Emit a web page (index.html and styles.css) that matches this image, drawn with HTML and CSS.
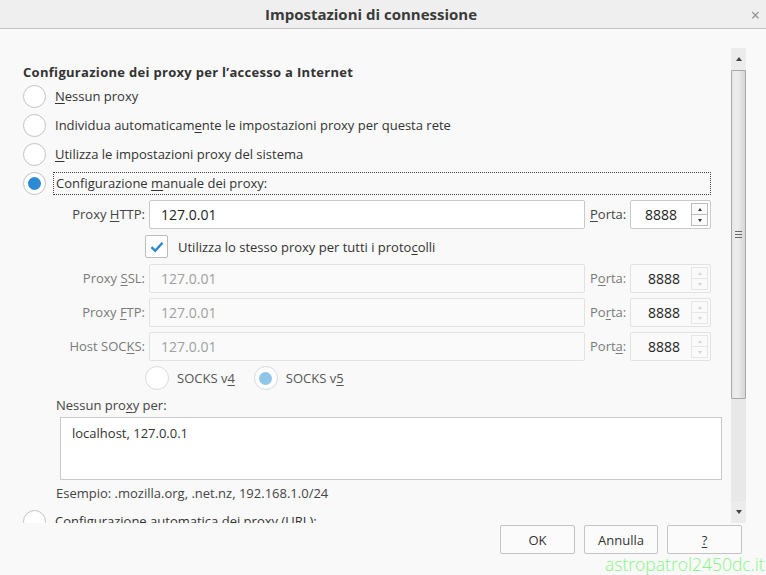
FILE: index.html
```html
<!DOCTYPE html>
<html lang="it">
<head>
<meta charset="utf-8">
<title>Impostazioni di connessione</title>
<link rel="stylesheet" href="styles.css">
</head>
<body>
<div class="window">
  <div class="titlebar">
    <span class="title">Impostazioni di connessione</span>
    <span class="close">×</span>
  </div>
  <div class="main">
    <div class="content">
      <div class="heading">Configurazione dei proxy per l’accesso a Internet</div>
      <div class="radio-row"><span class="radio"></span><span class="rlabel"><u>N</u>essun proxy</span></div>
      <div class="radio-row"><span class="radio"></span><span class="rlabel">Individua automaticam<u>e</u>nte le impostazioni proxy per questa rete</span></div>
      <div class="radio-row"><span class="radio"></span><span class="rlabel"><u>U</u>tilizza le impostazioni proxy del sistema</span></div>
      <div class="radio-row"><span class="radio checked"></span><span class="rlabel focus">Configurazione <u>m</u>anuale dei proxy:</span></div>

      <div class="proxy-grid">
        <span class="flabel">Proxy <u>H</u>TTP:</span>
        <span class="field"><span class="val">127.0.01</span></span>
        <span class="plabel"><u>P</u>orta:</span>
        <span class="port"><span class="pval">8888</span><span class="spin"><span class="up"></span><span class="down"></span></span></span>

        <span class="check-row"><span class="checkbox"><svg width="14" height="12" viewBox="0 0 14 12"><path d="M1.5 6.2 L5.2 9.8 L12.5 1.8" fill="none" stroke="#2b87cc" stroke-width="2.4"/></svg></span><span class="clabel">Utilizza lo stesso proxy per tutti i proto<u>c</u>olli</span></span>

        <span class="flabel dis">Proxy <u>S</u>SL:</span>
        <span class="field dis"><span class="val">127.0.01</span></span>
        <span class="plabel dis">P<u>o</u>rta:</span>
        <span class="port dis"><span class="pval">8888</span><span class="spin"><span class="up"></span><span class="down"></span></span></span>

        <span class="flabel dis">Proxy <u>F</u>TP:</span>
        <span class="field dis"><span class="val">127.0.01</span></span>
        <span class="plabel dis">Po<u>r</u>ta:</span>
        <span class="port dis"><span class="pval">8888</span><span class="spin"><span class="up"></span><span class="down"></span></span></span>

        <span class="flabel dis">Host SOC<u>K</u>S:</span>
        <span class="field dis"><span class="val">127.0.01</span></span>
        <span class="plabel dis">Port<u>a</u>:</span>
        <span class="port dis"><span class="pval">8888</span><span class="spin"><span class="up"></span><span class="down"></span></span></span>

        <span class="socks-row">
          <span class="radio"></span><span class="slabel">SOCKS v<u>4</u></span>
          <span class="radio checked dis"></span><span class="slabel">SOCKS v<u>5</u></span>
        </span>
      </div>

      <div class="noproxy-label">Nessun pro<u>x</u>y per:</div>
      <div class="textarea">localhost, 127.0.0.1</div>
      <div class="example">Esempio: .mozilla.org, .net.nz, 192.168.1.0/24</div>
      <div class="radio-row last"><span class="radio"></span><span class="rlabel">Configurazione automatica dei proxy (URL):</span></div>
    </div>
    <div class="scrollbar">
      <div class="sb-btn"><span class="tri-up"></span></div>
      <div class="sb-thumb"><span class="grip"></span></div>
      <div class="sb-track"></div>
      <div class="sb-btn"><span class="tri-down"></span></div>
    </div>
  </div>
  <div class="footer">
    <span class="btn">OK</span>
    <span class="btn narrow">Annulla</span>
    <span class="btn"><u>?</u></span>
  </div>
  <div class="watermark">astropatrol2450dc.it</div>
</div>
</body>
</html>
```

FILE: styles.css
```css
* { box-sizing: border-box; }
html, body { margin: 0; padding: 0; }
body {
  font-family: "Open Sans", "Liberation Sans", sans-serif;
  font-size: 13px;
  color: #333;
  background: #f9f9f9;
}
u { text-decoration: underline; text-underline-offset: 2px; text-decoration-thickness: 1px; }

.window {
  position: relative;
  width: 766px;
  height: 575px;
  overflow: hidden;
  display: flex;
  flex-direction: column;
  background: #f9f9f9;
}
.titlebar {
  position: relative;
  height: 29px;
  flex: none;
  background: #efefef;
  border-bottom: 1px solid #c4c4c4;
  display: flex;
  align-items: center;
  justify-content: center;
}
.title {
  font-weight: 700;
  font-size: 15px;
  color: #3a3a3a;
  margin-right: 24px;
}
.close {
  position: absolute;
  right: 6px;
  top: 4px;
  font-size: 16px;
  color: #8a8a8a;
}

.main {
  height: 494px;
  flex: none;
  display: flex;
}
.content {
  flex: 1;
  overflow: hidden;
  padding: 33px 0 0 23px;
}
.heading {
  font-weight: 700;
  height: 20px;
  line-height: 20px;
  color: #333;
  letter-spacing: 0.3px;
}
.radio-row {
  height: 29px;
  display: flex;
  align-items: center;
}
.radio {
  width: 23px;
  height: 23px;
  border-radius: 50%;
  border: 1px solid #c3c3c3;
  background: #fff;
  flex: none;
  display: flex;
  align-items: center;
  justify-content: center;
}
.radio.checked::after {
  content: "";
  width: 13px;
  height: 13px;
  border-radius: 50%;
  background: #2b8ad3;
}
.radio.checked.dis::after { background: #8fc5e8; }
.radio.checked.dis { border-color: #d8d8d8; }
.rlabel {
  margin-left: 7px;
  line-height: 21px;
  padding: 0 2px;
}
.rlabel.focus {
  flex: none;
  width: 658px;
  border: 1px dotted #444;
  margin-left: 7px;
}

.proxy-grid {
  display: grid;
  grid-template-columns: 122px 440px 45px 81px;
  grid-template-rows: 29px 25px 29px 29px 29px 24px;
  row-gap: 5px;
  margin-top: 2px;
  align-items: center;
}
.proxy-grid > .flabel,
.proxy-grid > .field,
.proxy-grid > .plabel,
.proxy-grid > .port { height: 29px; }
.flabel {
  text-align: right;
  line-height: 29px;
  color: #444;
}
.flabel.dis, .plabel.dis { color: #7a7a7a; }
.field {
  margin-left: 4px;
  background: #fff;
  border: 1px solid #c9c9c9;
  border-radius: 2px;
  display: flex;
  align-items: center;
  padding-left: 11px;
  font-size: 14px;
  color: #222;
}
.field.dis { background: #fafafa; border-color: #e2e2e2; color: #a0a0a0; }
.plabel {
  line-height: 29px;
  padding-left: 5px;
  color: #444;
}
.port {
  background: #fff;
  border: 1px solid #c9c9c9;
  border-radius: 2px;
  display: flex;
  align-items: center;
  justify-content: space-between;
  padding-left: 14px;
  padding-right: 2px;
  font-size: 14px;
  color: #222;
}
.port.dis { background: #fafafa; border-color: #e2e2e2; padding-left: 17px; }
.spin {
  width: 17px;
  height: 23px;
  border: 1px solid #bdbdbd;
  display: flex;
  flex-direction: column;
  background: #fafafa;
}
.spin .up, .spin .down {
  flex: 1;
  display: flex;
  align-items: center;
  justify-content: center;
}
.spin .up { border-bottom: 1px solid #bdbdbd; }
.spin .up::after {
  content: "";
  border-left: 2.5px solid transparent;
  border-right: 2.5px solid transparent;
  border-bottom: 3px solid #333;
}
.spin .down::after {
  content: "";
  border-left: 2.5px solid transparent;
  border-right: 2.5px solid transparent;
  border-top: 3px solid #333;
}
.port.dis .spin { border-color: #e6e6e6; }
.port.dis .spin .up { border-bottom-color: #e6e6e6; }
.port.dis .spin .up::after { border-bottom-color: #d4d4d4; }
.port.dis .spin .down::after { border-top-color: #d4d4d4; }

.check-row {
  grid-column: 2 / 5;
  display: flex;
  align-items: center;
}
.checkbox {
  width: 23px;
  height: 23px;
  border: 1px solid #bcbcbc;
  border-radius: 2px;
  background: #fff;
  display: flex;
  align-items: center;
  justify-content: center;
}
.clabel { margin-left: 10px; }

.socks-row {
  grid-column: 2 / 5;
  display: flex;
  align-items: center;
}
.socks-row .radio { width: 24px; height: 24px; border-color: #dadada; }
.slabel { margin-left: 8px; margin-right: 19px; color: #555; }

.noproxy-label {
  margin-left: 33px;
  margin-top: 5px;
  line-height: 20px;
  color: #444;
}
.textarea {
  margin: 2px 0 0 37px;
  width: 662px;
  height: 63px;
  background: #fff;
  border: 1px solid #c9c9c9;
  padding: 6px 11px;
  font-size: 13px;
  color: #333;
}
.example {
  margin-left: 33px;
  margin-top: 4px;
  line-height: 19px;
  color: #444;
}
.radio-row.last { margin-top: 4px; }

.scrollbar {
  flex: none;
  width: 15px;
  margin: 19px 20px 0 0;
  height: 475px;
  display: flex;
  flex-direction: column;
  background: #e8e8e8;
}
.sb-btn {
  height: 22px;
  flex: none;
  display: flex;
  align-items: center;
  justify-content: center;
  background: #ececec;
}
.tri-up {
  border-left: 3px solid transparent;
  border-right: 3px solid transparent;
  border-bottom: 4px solid #444;
}
.tri-down {
  border-left: 3px solid transparent;
  border-right: 3px solid transparent;
  border-top: 4px solid #444;
}
.sb-thumb {
  height: 329px;
  flex: none;
  border: 1px solid #a8a8a8;
  border-radius: 1px;
  background: linear-gradient(to right, #e6e6e6, #eeeeee 40%, #d6d6d6);
  display: flex;
  align-items: center;
  justify-content: center;
}
.grip {
  width: 7px;
  height: 7px;
  border-top: 1px solid #666;
  border-bottom: 1px solid #666;
  position: relative;
}
.grip::after {
  content: "";
  position: absolute;
  left: 0; right: 0; top: 2px;
  border-top: 1px solid #666;
}
.sb-track { flex: 1; }

.footer {
  flex: 1;
  display: flex;
  justify-content: flex-end;
  align-items: flex-start;
  gap: 9px;
  padding: 2px 24px 0 0;
}
.btn {
  width: 75px;
  height: 29px;
  border: 1px solid #c4c4c4;
  border-radius: 2px;
  background: #fbfbfb;
  display: flex;
  align-items: center;
  justify-content: center;
  font-size: 13px;
  color: #333;
}
.btn.narrow { width: 74px; }
.watermark {
  position: absolute;
  left: 605px;
  top: 552px;
  font-family: "Open Sans", sans-serif;
  font-weight: 300;
  font-size: 17.5px;
  line-height: 24px;
  color: #85f585;
  white-space: nowrap;
}
```
